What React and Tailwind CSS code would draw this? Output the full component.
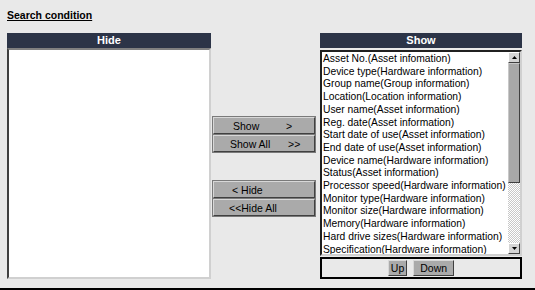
import React, { useState } from 'react';

const shown = [
    'Asset No.(Asset infomation)',
    'Device type(Hardware information)',
    'Group name(Group information)',
    'Location(Location information)',
    'User name(Asset information)',
    'Reg. date(Asset information)',
    'Start date of use(Asset information)',
    'End date of use(Asset information)',
    'Device name(Hardware information)',
    'Status(Asset information)',
    'Processor speed(Hardware information)',
    'Monitor type(Hardware information)',
    'Monitor size(Hardware information)',
    'Memory(Hardware information)',
    'Hard drive sizes(Hardware information)',
    'Specification(Hardware information)',
];

const btn =
    'h-[17px] w-[102px] flex items-center text-[10.5px] leading-[12px] text-black bg-[#aaaaaa] border border-t-[#d8d8d8] border-l-[#d8d8d8] border-r-[#404040] border-b-[#404040] outline outline-1 outline-[#7a7a7a]';

const smallBtn =
    'h-[16px] flex items-center justify-center text-[10.5px] leading-[12px] bg-[#aaaaaa] border border-t-[#d8d8d8] border-l-[#d8d8d8] border-r-[#404040] border-b-[#404040]';

const App = () => {
    const [hidden] = useState([]);

    return (
        <div
            className="w-[535px] h-[290px] bg-[#e9e9e9] border-b-2 border-black overflow-hidden"
            style={{ fontFamily: '"Liberation Sans", Arial, sans-serif' }}
        >
            <div className="h-[33px] pl-[7px] pt-[9px]">
                <span className="block text-[10.5px] font-bold underline text-black leading-[13px]">Search condition</span>
            </div>

            <div className="flex pl-[7px]">
                {/* Hide column */}
                <div className="w-[204px] flex flex-col">
                    <div className="h-[15px] bg-[#2c3447] text-white text-[11px] font-bold text-center leading-[15px]">
                        Hide
                    </div>
                    <div className="h-[231px] bg-white border-2 border-t-[#808080] border-l-[#404040] border-r-[#d0d0d0] border-b-[#d0d0d0]">
                        {hidden.map((h) => (
                            <div key={h}>{h}</div>
                        ))}
                    </div>
                </div>

                {/* Move buttons */}
                <div className="w-[102px] ml-[2px] flex flex-col pt-[84px]">
                    <button className={btn}>
                        <span className="pl-[19px] w-[72px] text-left">Show</span>
                        <span>&gt;</span>
                    </button>
                    <button className={btn + ' mt-[1px]'}>
                        <span className="pl-[16px] w-[74px] text-left">Show All</span>
                        <span>&gt;&gt;</span>
                    </button>
                    <button className={btn + ' mt-[29px]'}>
                        <span className="pl-[18px]">&lt; Hide</span>
                    </button>
                    <button className={btn + ' mt-[1px]'}>
                        <span className="pl-[15px]">&lt;&lt;Hide All</span>
                    </button>
                </div>

                {/* Show column */}
                <div className="w-[202px] ml-[5px] flex flex-col">
                    <div className="h-[15px] bg-[#2c3447] text-white text-[11px] font-bold text-center leading-[15px]">
                        Show
                    </div>
                    <div className="mt-[2px] h-[206px] flex bg-white border-2 border-t-[#202020] border-l-[#202020] border-r-[#d0d0d0] border-b-[#d0d0d0]">
                        <div className="flex-1 overflow-hidden pl-[1px] pt-[1px]">
                            {shown.map((s) => (
                                <div key={s} className="text-[10.3px] leading-[12.7px] text-black whitespace-nowrap">
                                    {s}
                                </div>
                            ))}
                        </div>
                        <div className="w-[12px] flex flex-col bg-[repeating-conic-gradient(#c8c8c8_0_25%,#ffffff_0_50%)] bg-[length:2px_2px]">
                            <div className="h-[11px] bg-[#d4d4d4] border border-t-white border-l-white border-r-[#404040] border-b-[#404040] flex items-center justify-center">
                                <svg width="5" height="3" viewBox="0 0 5 3"><path d="M2.5 0 L5 3 L0 3 Z" fill="#000" /></svg>
                            </div>
                            <div className="h-[120px] bg-[#a8a8a8] border border-t-[#c8c8c8] border-l-[#c8c8c8] border-r-[#404040] border-b-[#404040]" />
                            <div className="flex-1" />
                            <div className="h-[11px] bg-[#d4d4d4] border border-t-white border-l-white border-r-[#404040] border-b-[#404040] flex items-center justify-center">
                                <svg width="5" height="3" viewBox="0 0 5 3"><path d="M0 0 L5 0 L2.5 3 Z" fill="#000" /></svg>
                            </div>
                        </div>
                    </div>
                    <div className="mt-[1px] h-[22px] border-2 border-black bg-[#e9e9e9] flex items-center justify-center gap-[6px]">
                        <button className={smallBtn + ' px-[2px]'}>Up</button>
                        <button className={smallBtn + ' px-[6px]'}>Down</button>
                    </div>
                </div>
            </div>
        </div>
    );
};

export default App;
